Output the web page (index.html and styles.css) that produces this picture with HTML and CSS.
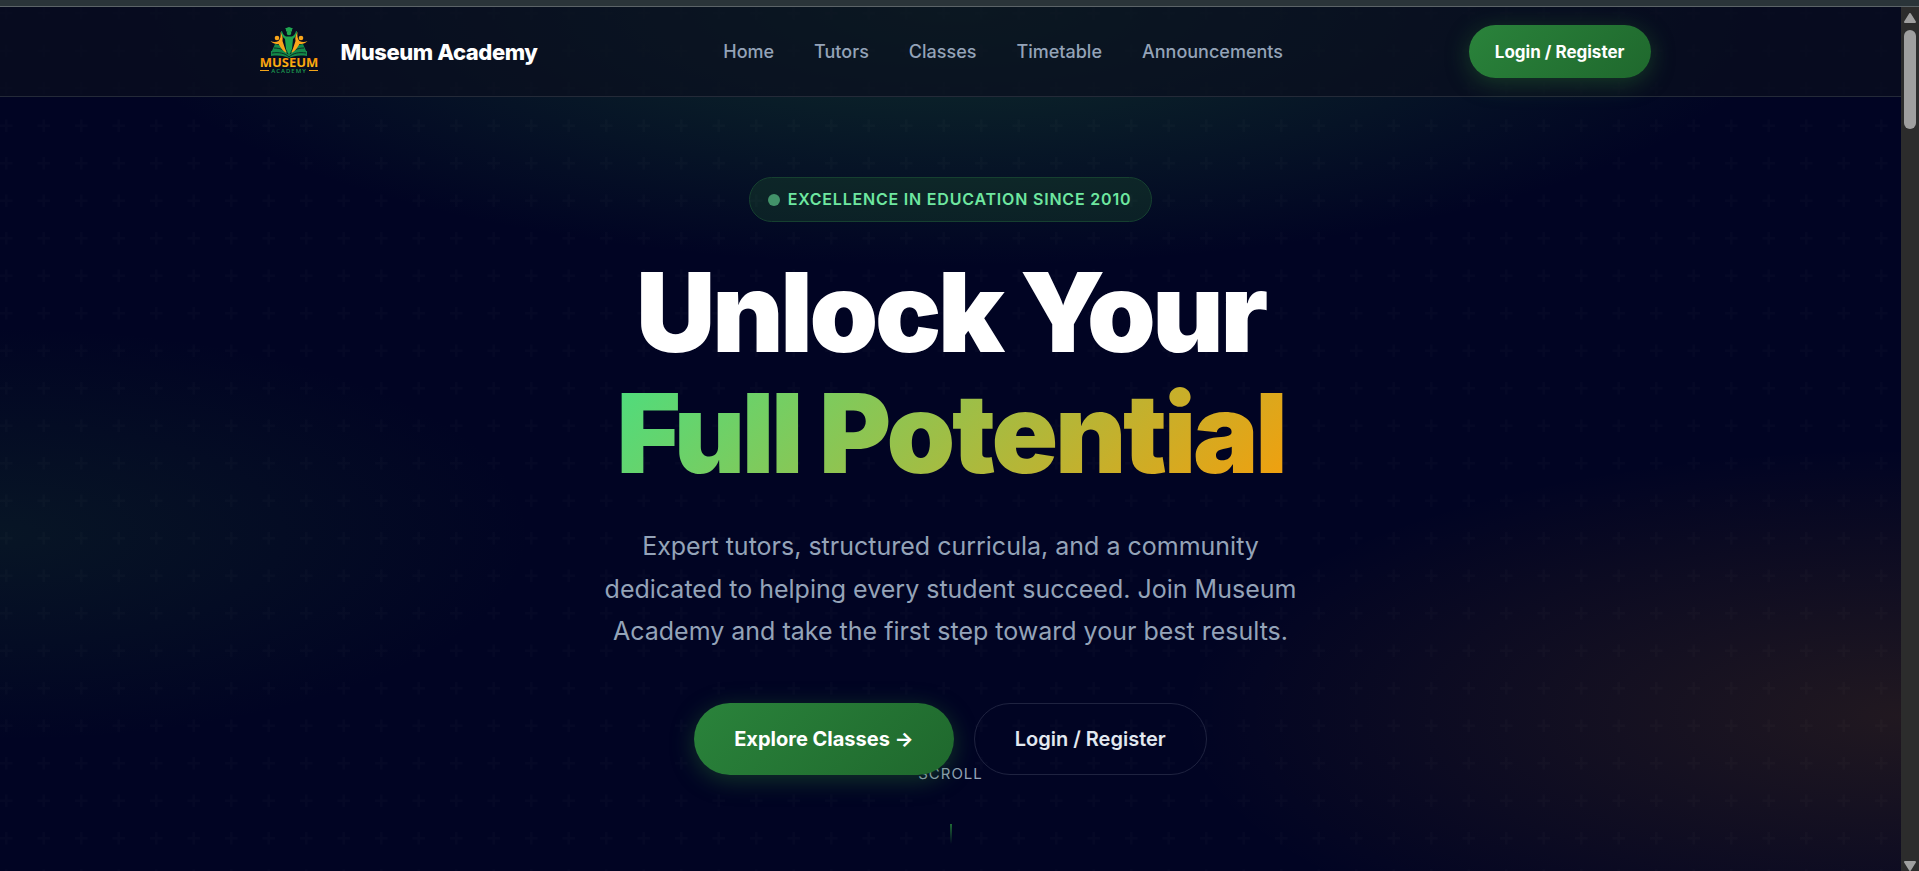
FILE: index.html
```html
<!DOCTYPE html>
<html lang="en">
<head>
<meta charset="utf-8">
<meta name="viewport" content="width=device-width, initial-scale=1">
<title>Museum Academy</title>
<link rel="stylesheet" href="styles.css">
</head>
<body>
<div class="window">
  <div class="window-edge"></div>
  <div class="view">
    <div class="page">
      <svg class="pattern" aria-hidden="true">
        <defs>
          <pattern id="plus" width="60" height="60" patternUnits="userSpaceOnUse" patternTransform="scale(1.25)">
            <path fill="#fff" fill-opacity=".014" d="M36 34v-4h-2v4h-4v2h4v4h2v-4h4v-2h-4zm0-30V0h-2v4h-4v2h4v4h2V6h4V4h-4zM6 34v-4H4v4H0v2h4v4h2v-4h4v-2H6zM6 4V0H4v4H0v2h4v4h2V6h4V4H6z"/>
          </pattern>
        </defs>
        <rect width="100%" height="100%" fill="url(#plus)"/>
      </svg>
      <header class="header">
        <div class="container">
          <a class="brand" href="#">
            <svg class="logo" viewBox="1 2 80 64" role="img" aria-label="Museum Academy logo">
              <defs>
                <linearGradient id="gold" x1="0" y1="0" x2="0" y2="1"><stop offset="0" stop-color="#f57c00"/><stop offset="1" stop-color="#ffca1a"/></linearGradient>
              </defs>
              <g fill="#148a49">
                <path d="M25 26c7 1 11 5 14 11v2c-5-4-10-5-18-4z"/>
                <path d="M53 26c-7 1-11 5-14 11v2c5-4 10-5 18-4z"/>
                <path d="M21 33c8-1 14 0 18 4 4-4 10-5 18-4v5c-8-1-14 0-18 2-4-2-10-3-18-2z"/>
              </g>
              <path d="M22 35c7-1 13 0 17 4 4-4 10-5 17-4M24 30c6 0 11 2 14 6M54 30c-6 0-11 2-14 6" fill="none" stroke="#07131d" stroke-width=".8"/>
              <g fill="#f9a51a">
                <circle cx="27" cy="20" r="2.300"/><circle cx="51" cy="20" r="2.300"/>
                <path d="M20.500 23c3 1.500 6 1 8 0 2-2 2.500-5 2-9 2 2 2.500 6 2 9l4 12c-4-2-6-6-8-9-3 0-6-.5-8-3z"/>
                <path d="M57.500 23c-3 1.500-6 1-8 0-2-2-2.500-5-2-9-2 2-2.500 6-2 9l-4 12c4-2 6-6 8-9 3 0 6-.5 8-3z"/>
              </g>
              <g fill="#1fa550">
                <path d="M35 10.500l4-1.500 4 1.500-1 1v2h-6v-2z"/>
                <circle cx="39" cy="15" r="2.300"/>
                <path d="M32 13c1 4 3 5.500 5 5.500h4c2 0 4-1.500 5-5.500l1 .5c-.5 4-2 6-4 7.500l-1 10-3 6-3-6-1-10c-2-1.500-3.500-3.500-4-7.500z"/>
              </g>
              <text class="logo-name" x="39" y="49" text-anchor="middle" fill="url(#gold)">MUSEUM</text>
              <text class="logo-sub" x="39" y="55" text-anchor="middle" fill="#1c9a50">ACADEMY</text>
              <path d="M10 52.500h9M59 52.500h9" stroke="#f2a51c"/>
            </svg>
            <span class="brand-name">Museum Academy</span>
          </a>
          <nav class="nav">
            <a href="#">Home</a>
            <a href="#">Tutors</a>
            <a href="#">Classes</a>
            <a href="#">Timetable</a>
            <a href="#">Announcements</a>
          </nav>
          <a class="btn btn-primary btn-small" href="#">Login / Register</a>
        </div>
      </header>
      <main class="hero">
        <div class="scroll-hint"><span>SCROLL</span><i class="scroll-line"></i></div>
        <div class="hero-content">
          <p class="badge"><i class="dot"></i>EXCELLENCE IN EDUCATION SINCE 2010</p>
          <h1 class="title">Unlock Your<br><span class="gradient-text">Full Potential</span></h1>
          <p class="lead">Expert tutors, structured curricula, and a community dedicated to helping every student succeed. Join Museum Academy and take the first step toward your best results.</p>
          <div class="actions">
            <a class="btn btn-primary" href="#">Explore Classes →</a>
            <a class="btn btn-outline" href="#">Login / Register</a>
          </div>
        </div>
      </main>
    </div>
    <div class="scrollbar" aria-hidden="true">
      <svg class="arrow" viewBox="0 0 12 10"><path d="M6 1L11 9H1z"/></svg>
      <div class="thumb"></div>
      <svg class="arrow arrow-down" viewBox="0 0 12 10"><path d="M6 9L11 1H1z"/></svg>
    </div>
  </div>
</div>
</body>
</html>
```
FILE: styles.css
```css
* { box-sizing: border-box; }

body {
  margin: 0;
  background: #010423;
  color: #fff;
  font-family: Inter, "Liberation Sans", sans-serif;
}

a { color: inherit; text-decoration: none; }

.window {
  display: flex;
  flex-direction: column;
  height: 100vh;
  overflow: hidden;
}

.window-edge {
  flex: none;
  height: 7px;
  background: #2a3439;
  border-bottom: 1px solid #5c6468;
}

.view { flex: 1; display: flex; min-height: 0; }

.page {
  position: relative;
  flex: 1;
  display: flex;
  flex-direction: column;
  overflow: hidden;
  background:
    radial-gradient(ellipse 44% 30% at 50% 0%, rgba(42, 128, 60, 0.34), transparent),
    radial-gradient(ellipse 38% 31% at 100% 82%, rgba(245, 158, 11, 0.13), transparent),
    radial-gradient(ellipse 28% 24% at 0% 61%, rgba(46, 125, 50, 0.14), transparent),
    #010423;
}

.pattern {
  position: absolute;
  inset: 0;
  width: 100%;
  height: 100%;
}

.header {
  position: relative;
  background: rgba(10, 14, 30, 0.7);
  border-bottom: 1px solid #242a38;
}

.container {
  display: flex;
  align-items: center;
  justify-content: space-between;
  max-width: 1400px;
  margin: 0 auto;
  padding: 18px 0;
}

.brand { display: flex; align-items: center; gap: 10px; }
.logo { width: 80px; height: 64px; margin: -6px 0; }
.logo-name { font: 700 13px "Open Sans", sans-serif; }
.logo-sub { font: 600 6px "Open Sans", sans-serif; letter-spacing: 1px; }
.brand-name { font-size: 22px; font-weight: 800; line-height: 26px; letter-spacing: -0.02em; }

.nav {
  display: flex;
  gap: 40px;
  color: #94a3b8;
  font-size: 18px;
  font-weight: 500;
}

.btn {
  display: inline-block;
  padding: 24px 40px;
  border-radius: 50px;
  font-size: 20px;
  font-weight: 700;
  line-height: 24px;
}

.btn-primary {
  background: linear-gradient(135deg, #2a833b, #1f682d);
  box-shadow: 0 5px 25px rgba(46, 125, 50, 0.4);
}

.btn-small { padding: 16px 26px 15px; font-size: 17px; line-height: 22px; }

.btn-outline {
  padding: 23px 40px;
  border: 1px solid #1f2340;
  color: #e2e8f0;
  font-weight: 600;
}

.hero {
  position: relative;
  flex: 1;
  padding: 80px 24px;
}

.hero-content {
  position: relative;
  display: flex;
  flex-direction: column;
  align-items: center;
  text-align: center;
}

.badge {
  display: flex;
  align-items: center;
  gap: 8px;
  margin: 0 0 30px;
  padding: 12px 20px 12px 18px;
  border: 1px solid #164030;
  border-radius: 50px;
  background: rgba(46, 125, 50, 0.2);
  color: #6ee7a0;
  font-size: 16px;
  font-weight: 600;
  line-height: 19px;
  letter-spacing: 0.05em;
}

.dot { width: 12px; height: 12px; border-radius: 50%; background: #429269; }

.title {
  margin: 0 0 31px;
  font-size: 110px;
  font-weight: 900;
  line-height: 1.1;
  letter-spacing: -0.03em;
}

.gradient-text {
  background: linear-gradient(135deg, #4ade80, #f59e0b);
  -webkit-background-clip: text;
  background-clip: text;
  color: transparent;
}

.lead {
  max-width: 700px;
  margin: 0 0 50px;
  color: #94a3b8;
  font-size: 25px;
  line-height: 1.7;
}

.actions { display: flex; gap: 20px; }

.scroll-hint {
  position: absolute;
  left: 0;
  right: 0;
  bottom: 27px;
  display: flex;
  flex-direction: column;
  align-items: center;
  gap: 41px;
  color: #94a3b8;
  font-size: 15px;
  line-height: 18px;
  letter-spacing: 1px;
}

.scroll-line {
  width: 2px;
  height: 20px;
  background: linear-gradient(#1f6a35, transparent);
}

.scrollbar {
  flex: none;
  display: flex;
  flex-direction: column;
  align-items: center;
  width: 18px;
  padding: 6px 0 0;
  background: #2c2c2c;
}

.arrow { width: 12px; height: 10px; fill: #9f9f9f; stroke: #9f9f9f; stroke-width: 2; stroke-linejoin: round; }
.arrow-down { margin-top: auto; }
.thumb { width: 12px; height: 99px; margin-top: 7px; border-radius: 6px; background: #9f9f9f; }
```
